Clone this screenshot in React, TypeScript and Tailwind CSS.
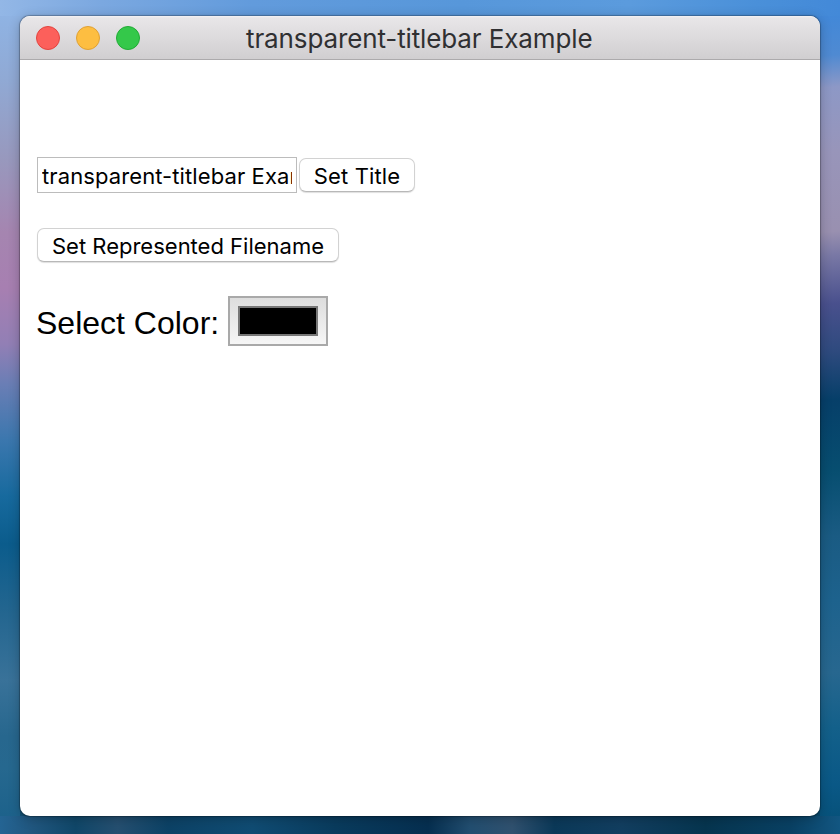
import { useState } from "react";

function TrafficLight({ className }: { className: string }) {
  return <span className={`h-6 w-6 rounded-full border ${className}`} />;
}

function PushButton({ children, className }: { children: string; className: string }) {
  return (
    <button
      className={`flex h-[34px] items-center justify-center whitespace-nowrap rounded-[7px] border border-[#d2d2d2] border-b-[#b8b8b8] bg-white pt-[2px] text-[22px] leading-none text-black shadow-[0_1px_1px_rgba(0,0,0,0.13)] ${className}`}
    >
      {children}
    </button>
  );
}

export default function App() {
  const [title, setTitle] = useState("transparent-titlebar Example");
  return (
    <div className="flex h-[834px] w-[840px] flex-col overflow-hidden bg-[#0b5580] font-['Inter','Liberation_Sans',sans-serif]">
      <div className="h-4 shrink-0 bg-[linear-gradient(90deg,#93b7e6_0%,#7ba8e0_12%,#629bdc_30%,#5797da_55%,#5b9bdd_75%,#4a90d9_90%,#4389d8_100%)]" />
      <div className="flex h-[800px] shrink-0 bg-[linear-gradient(90deg,#8fb3e3,#4288d8),linear-gradient(90deg,#155275,#07486c)] bg-[length:100%_50%,100%_100%] bg-no-repeat">
        <div className="w-5 shrink-0 bg-[linear-gradient(180deg,#8fb3e3_0%,#90a9d4_8%,#9898bd_18%,#a585b0_27%,#a77fb1_34%,#927fb5_41%,#6a7eb5_46%,#3b77ae_53%,#176a9e_60%,#0b5c8c_66%,#22658f_74%,#397299_83%,#27678e_90%,#26688f_94%,#1d628b_100%)]" />
        <div className="relative z-10 flex w-[800px] shrink-0 flex-col overflow-hidden rounded-[10px] bg-white shadow-[0_0_1px_1px_rgba(0,0,0,0.26),0_2px_12px_rgba(0,0,0,0.25)]">
          <header className="grid h-11 shrink-0 grid-cols-[226px_348px_226px] items-center border-b border-b-[#acaaac] bg-[linear-gradient(180deg,#f4f2f4_0px,#e8e6e8_2px,#d1cfd1_42px)]">
            <div className="flex gap-4 pl-4">
              <TrafficLight className="border-[#e2443f] bg-[#fc605b]" />
              <TrafficLight className="border-[#dfa034] bg-[#fdbe41]" />
              <TrafficLight className="border-[#21ab35] bg-[#34c84a]" />
            </div>
            <h1 className="whitespace-nowrap pt-[3px] text-[26px] leading-none tracking-[-0.12px] text-[#303032]">{title}</h1>
          </header>
          <main className="flex flex-col items-start pl-[17px] pt-[97px] text-black">
            <div className="flex items-center gap-[2px]">
              <input
                value={title}
                onChange={(e) => setTitle(e.target.value)}
                className="h-9 w-[260px] rounded-none border border-[#bcbcbc] bg-white px-1 pb-0 pt-[2px] text-[22px] tracking-[0.1px] outline-none"
              />
              <PushButton className="w-[116px] tracking-[0.15px]">Set Title</PushButton>
            </div>
            <PushButton className="mt-[35px] w-[302px]">Set Represented Filename</PushButton>
            <label className="mt-[34px] flex h-[50px] items-center font-['Liberation_Sans',Arial,sans-serif] text-[32px] leading-none">
              <span className="-ml-px w-[192px] whitespace-nowrap pt-[3px]">Select Color:</span>
              <span className="flex h-[50px] w-[100px] items-center justify-center border-2 border-[#a9a9a9] bg-[linear-gradient(180deg,#dddddd,#f6f6f6)]">
                <span className="h-[30px] w-20 border-2 border-[#777777] bg-black" />
              </span>
            </label>
          </main>
        </div>
        <div className="w-5 shrink-0 bg-[linear-gradient(175deg,#4288d8_0%,#4f8ad2_5%,#8d98c6_9%,#9895ba_17%,#9990b0_27%,#7978a5_30%,#49508d_36%,#2e4a7e_42%,#063f69_48%,#074e70_57%,#1a5b83_65%,#1d628d_73%,#27678f_82%,#13608a_89%,#0a5886_96%,#07527b_100%)]" />
      </div>
      <div className="h-[18px] shrink-0 bg-[linear-gradient(90deg,#246493_0%,#20567e_4%,#104769_9%,#254f70_14%,#0c4266_20%,#104c73_30%,#093b5d_40%,#062f50_51%,#224e70_56%,#30516f_61%,#0b3959_66%,#123e60_74%,#06354f_84%,#094063_94%,#125681_100%)]" />
    </div>
  );
}
